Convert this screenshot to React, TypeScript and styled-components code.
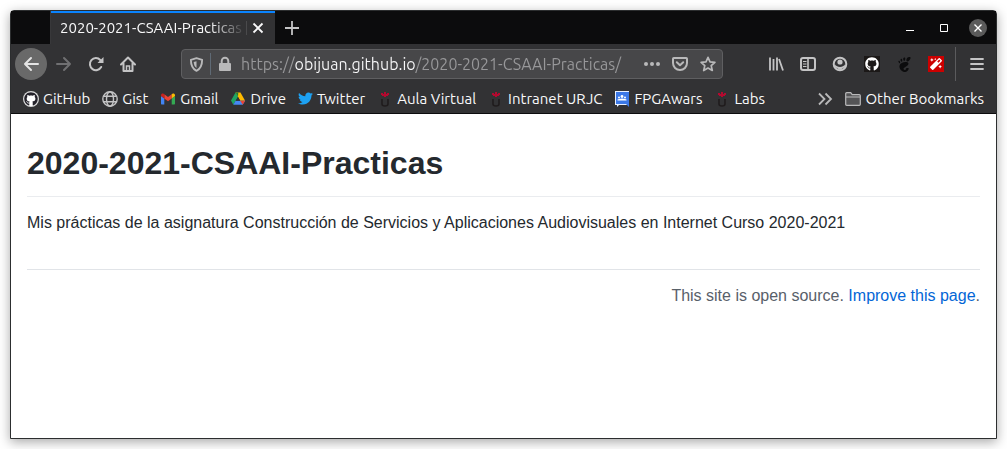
import React from 'react';
import styled, { createGlobalStyle, css } from 'styled-components';
import { FaGithub, FaMagic, FaTwitter } from 'react-icons/fa';
import { SiGnome } from 'react-icons/si';

const uiFont = 'Ubuntu, "Noto Sans", sans-serif';
const pageFont = '"Liberation Sans", Arial, Helvetica, sans-serif';

const GlobalStyle = createGlobalStyle`
  *, *::before, *::after { box-sizing: border-box; }
  body { margin: 0; background: #fff; }
`;

const Desktop = styled.div`
  display: flex;
  min-height: 100vh;
  padding: 10px;
`;

const BrowserWindow = styled.div`
  flex: 1;
  min-width: 0;
  display: flex;
  flex-direction: column;
  border: 1px solid #2c2e2f;
  border-radius: 4px 4px 0 0;
  background: #fff;
  box-shadow: 0 3px 12px rgba(0, 0, 0, 0.35);
  font-family: ${uiFont};
`;

const bareButton = css`
  display: flex;
  align-items: center;
  justify-content: center;
  flex: none;
  padding: 0;
  border: 0;
  background: none;
  color: #b9b9ba;
`;

const TabStrip = styled.div`
  display: flex;
  height: 33px;
  padding-left: 39px;
  background: #0c0c0d;
`;

const Tab = styled.div`
  display: flex;
  align-items: center;
  width: 225px;
  padding: 0 6px 0 9px;
  border-left: 1px solid #38383a;
  background: #323234;
  box-shadow: inset 0 2px #0a84ff;
`;

const TabTitle = styled.span`
  flex: 1;
  overflow: hidden;
  white-space: nowrap;
  font-size: 15px;
  line-height: 20px;
  color: #f9f9fa;
  mask-image: linear-gradient(to left, transparent, #000 36px);
`;

const TabSeparator = styled.span`
  width: 1px;
  height: 14px;
  background: #4a4a4c;
`;

const TabButton = styled.button<{ $width: number }>`
  ${bareButton}
  width: ${(p) => p.$width}px;
  color: #f9f9fa;
`;

const WindowControls = styled.div`
  display: flex;
  align-items: center;
  gap: 16px;
  margin-left: auto;
  padding-right: 9px;
`;

const WindowButton = styled.button<{ $round?: boolean }>`
  ${bareButton}
  width: 18px;
  height: 18px;
  border-radius: 50%;
  background: ${(p) => (p.$round ? '#5a5a5a' : 'none')};
  color: #fff;
`;

const Toolbar = styled.div`
  display: flex;
  align-items: center;
  height: 40px;
  padding: 0 3px 0 4px;
  background: #323234;
`;

const ToolButton = styled.button<{ $raised?: boolean; $dim?: boolean }>`
  ${bareButton}
  width: 32px;
  height: 32px;
  margin-right: ${(p) => (p.$raised ? '1px' : '0')};
  border-radius: 50%;
  background: ${(p) => (p.$raised ? '#696969' : 'none')};
  color: ${(p) => (p.$raised ? '#e4e4e4' : p.$dim ? '#707072' : '#c4c4c5')};
`;

const AddressBar = styled.div`
  flex: 1;
  display: flex;
  align-items: center;
  min-width: 0;
  height: 30px;
  margin: 0 37px;
  border: 1px solid #5f5f61;
  border-radius: 4px;
  background: #474749;
`;

const AddressButton = styled.button`
  ${bareButton}
  width: 28px;
  height: 28px;
`;

const AddressDivider = styled.span`
  width: 1px;
  height: 22px;
  background: #5f6a75;
`;

const AddressInput = styled.input`
  flex: 1;
  min-width: 0;
  padding: 0 0 0 2px;
  border: 0;
  outline: 0;
  font: 16px/20px ${uiFont};
  color: transparent;
  background: linear-gradient(90deg, #98989a 56px, #f9f9fa 56px 176px, #98989a 176px);
  background-clip: text;
  -webkit-background-clip: text;
`;

const ToolbarDivider = styled.span`
  width: 1px;
  height: 34px;
  margin-left: 3px;
  margin-right: 5px;
  background: #5b5b5d;
`;

const BookmarksBar = styled.nav`
  display: flex;
  align-items: center;
  gap: 12px;
  height: 30px;
  padding: 0 12px;
  border-bottom: 1px solid #0c0c0d;
  background: #323234;
`;

const bookmarkLook = css`
  display: flex;
  align-items: center;
  gap: 4px;
  flex: none;
  padding: 0;
  border: 0;
  background: none;
  font: 15px/20px ${uiFont};
  color: #f9f9fa;
  text-decoration: none;
  white-space: nowrap;
`;

const Bookmark = styled.a`
  ${bookmarkLook}
`;

const FolderButton = styled.button`
  ${bookmarkLook}
`;

const OverflowButton = styled.button`
  ${bareButton}
  margin-left: auto;
`;

const Page = styled.main`
  flex: 1;
  padding: 31px 16px;
  font: 16px/24px ${pageFont};
  color: #24292e;
`;

const Title = styled.h1`
  margin: 0 0 14px;
  padding-bottom: 15px;
  border-bottom: 1px solid #eaecef;
  font-size: 32px;
  line-height: 36px;
  font-weight: 700;
`;

const Description = styled.p`
  margin: 0;
`;

const PageFooter = styled.footer`
  margin-top: 34px;
  padding-top: 14px;
  border-top: 1px solid #e1e4e8;
  color: #586069;
  text-align: right;
`;

const PageLink = styled.a`
  color: #0366d6;
  text-decoration: none;
`;

const Svg = ({ children, size = 16 }: { children: React.ReactNode; size?: number }) => (
  <svg width={size} height={size} viewBox="0 0 16 16" fill="none" stroke="currentColor" strokeWidth="2" aria-hidden="true">
    {children}
  </svg>
);

const GithubIcon = () => (
  <Svg>
    <circle cx="8" cy="8" r="8" fill="#d8d8d8" stroke="none" />
    <circle cx="8" cy="8" r="7" fill="#fff" stroke="none" />
    <FaGithub x="1" y="1" size={14} color="#24222a" stroke="none" />
  </Svg>
);

const GlobeIcon = () => (
  <Svg>
    <g stroke="#c4c4c5" strokeWidth="1.4">
      <circle cx="8" cy="8" r="7.2" />
      <ellipse cx="8" cy="8" rx="3.5" ry="7.2" />
      <path d="M1.5 5.3h13M1.5 10.7h13" />
    </g>
  </Svg>
);

const GmailIcon = () => (
  <Svg>
    <g stroke="none">
      <path fill="#4285f4" d="M1 5v7.5c0 .6.4 1 1 1h2.3V7.5z" />
      <path fill="#34a853" d="M15 5v7.5c0 .6-.4 1-1 1h-2.3V7.5z" />
      <path fill="#ea4335" d="M4.3 3.3 8 6.1l3.7-2.8v4.2L8 10.3 4.3 7.5z" />
      <path fill="#c5221f" d="M1 4.3c0-1.5 1.7-2.2 2.8-1.4l.5.4v4.2L1 5z" />
      <path fill="#fbbc04" d="M15 4.3c0-1.5-1.7-2.2-2.8-1.4l-.5.4v4.2L15 5z" />
    </g>
  </Svg>
);

const DriveIcon = () => (
  <Svg>
    <g stroke="none">
      <path fill="#1fa463" d="M5.5 1.5 1 9.5l2.3 4.3L8 5.7z" />
      <path fill="#ffba00" d="M5.5 1.5h5l4.6 8.2h-4.9z" />
      <path fill="#4688f4" d="M5.6 9.7h9.5l-2.4 4.1H3.3z" />
      <path fill="#188038" d="M5.5 1.5h2.8L8 5.7z" />
      <path fill="#ea4335" d="M10.2 9.7h4.9l-2.4 4.1z" />
      <path fill="#323234" d="m8 5.9 2.2 3.8H5.8z" />
    </g>
  </Svg>
);

const UniversityIcon = () => (
  <Svg>
    <path d="M5 8v5c0 1.400 1 2 3 2s3-.600 3-2V8" stroke="#201c1d" strokeWidth="1.600" />
    <path d="M4 2h2v1h1V1h2v2h1V2h2v2h-1v1H9v1H7V5H5V4H4z" fill="#b3092f" stroke="none" />
  </Svg>
);

const GroupsIcon = () => (
  <Svg>
    <g stroke="none">
      <path fill="#e8f0fe" d="M1 0h14v14H5l-2 2v-2H1z" />
      <path fill="#3b78e7" d="M2 1h13v15l-3-3H2z" />
      <circle cx="8" cy="5.5" r="1.4" fill="#fff" />
      <circle cx="5" cy="6.5" r="1" fill="#fff" />
      <circle cx="11" cy="6.5" r="1" fill="#fff" />
      <path fill="#fff" d="M3.500 9.500V8.400l1.500-.4 3-.4 3 .4 1.500.4v1.100z" />
    </g>
  </Svg>
);

const FolderIcon = () => (
  <Svg>
    <path d="M.7 13.3V2.7c0-.6.4-1 1-1h4l1.5 2h7.1c.6 0 1 .4 1 1v8.6c0 .6-.4 1-1 1H1.7c-.6 0-1-.4-1-1zM.7 6h14.6" fill="#545456" stroke="#b9b9ba" strokeWidth="1.2" />
  </Svg>
);

const bookmarks = [
  { label: 'GitHub', icon: <GithubIcon /> },
  { label: 'Gist', icon: <GlobeIcon /> },
  { label: 'Gmail', icon: <GmailIcon /> },
  { label: 'Drive', icon: <DriveIcon /> },
  { label: 'Twitter', icon: <FaTwitter size={15} color="#1da1f2" /> },
  { label: 'Aula Virtual', icon: <UniversityIcon /> },
  { label: 'Intranet URJC', icon: <UniversityIcon /> },
  { label: 'FPGAwars', icon: <GroupsIcon /> },
  { label: 'Labs', icon: <UniversityIcon /> },
];

export default function App() {
  return (
    <>
      <GlobalStyle />
      <Desktop>
        <BrowserWindow>
          <TabStrip>
            <Tab>
              <TabTitle>2020-2021-CSAAI-Practicas</TabTitle>
              <TabSeparator />
              <TabButton $width={22} aria-label="Close tab">
                <Svg><path d="m3.5 3.5 9 9m0-9-9 9" strokeWidth="1.8" /></Svg>
              </TabButton>
            </Tab>
            <TabButton $width={34} aria-label="New tab">
              <Svg><path d="M8 1v14M1 8h14" stroke="#c4c4c5" strokeWidth="1.8" /></Svg>
            </TabButton>
            <WindowControls>
              <WindowButton aria-label="Minimize">
                <Svg><path d="M4 10.5h8" strokeWidth="1" /></Svg>
              </WindowButton>
              <WindowButton aria-label="Maximize">
                <Svg><path d="M4.5 4.5h7v7h-7z" strokeWidth="1" /></Svg>
              </WindowButton>
              <WindowButton $round aria-label="Close window">
                <Svg><path d="m4.5 4.5 7 7m0-7-7 7" strokeWidth="1.4" /></Svg>
              </WindowButton>
            </WindowControls>
          </TabStrip>

          <Toolbar>
            <ToolButton $raised aria-label="Back">
              <Svg><path d="M15 8H2m6-6L2 8l6 6" strokeLinecap="round" strokeLinejoin="round" /></Svg>
            </ToolButton>
            <ToolButton $dim aria-label="Forward">
              <Svg><path d="M1 8h13M8 2l6 6-6 6" strokeLinecap="round" strokeLinejoin="round" /></Svg>
            </ToolButton>
            <ToolButton aria-label="Reload">
              <Svg>
                <path d="M13.2 11A6 6 0 1 1 12.3 4" strokeLinecap="round" />
                <path d="M15.5 1v6h-6z" fill="currentColor" stroke="none" />
              </Svg>
            </ToolButton>
            <ToolButton aria-label="Home">
              <Svg>
                <path d="M1 8.5 8 1.5l7 7M3.5 7.5V15h9V7.5" strokeLinecap="round" strokeLinejoin="round" />
                <path d="M6.5 14v-4h3v4" strokeWidth="1.5" />
              </Svg>
            </ToolButton>
            <AddressBar>
              <AddressButton aria-label="Tracking protection">
                <Svg size={15}>
                  <path d="M8 1.2 14 3c0 5.5-1 9.5-6 11.8C3 12.5 2 8.5 2 3z" strokeLinejoin="round" />
                  <path d="M8 4.5 5 5.3c.2 2.7.8 5 3 6.4z" fill="currentColor" stroke="none" />
                </Svg>
              </AddressButton>
              <AddressDivider />
              <AddressButton aria-label="Connection secure">
                <Svg>
                  <path d="M4.7 8V5a3.3 3.3 0 0 1 6.6 0v3" />
                  <rect x="2" y="7" width="12" height="8" rx="1" fill="currentColor" stroke="none" />
                </Svg>
              </AddressButton>
              <AddressInput
                aria-label="Address"
                defaultValue="https://obijuan.github.io/2020-2021-CSAAI-Practicas/"
              />
              <AddressButton aria-label="Page actions">
                <Svg>
                  <g fill="currentColor" stroke="none">
                    <circle cx="2" cy="8" r="2" /><circle cx="8" cy="8" r="2" /><circle cx="14" cy="8" r="2" />
                  </g>
                </Svg>
              </AddressButton>
              <AddressButton aria-label="Save to Pocket">
                <Svg>
                  <path d="M1.8 2h12.4c.5 0 .8.3.8.8V7A7 7 0 0 1 1 7V2.8c0-.5.3-.8.8-.8z" />
                  <path d="M4.8 6.2 8 9.2l3.2-3" strokeLinecap="round" strokeLinejoin="round" />
                </Svg>
              </AddressButton>
              <AddressButton aria-label="Bookmark this page">
                <Svg>
                  <path d="m8 1.3 2 4.5 4.9.5-3.7 3.3 1.1 4.9L8 12l-4.3 2.5 1.1-4.9L1.1 6.3 6 5.8z" strokeWidth="1.7" strokeLinejoin="round" />
                </Svg>
              </AddressButton>
            </AddressBar>
            <ToolButton aria-label="Library">
              <Svg><path d="M2 1.5v13M5.5 3v11.5M9 1.5v13M11 3l4 11.5" strokeWidth="1.8" /></Svg>
            </ToolButton>
            <ToolButton aria-label="Sidebars">
              <Svg>
                <rect x="1" y="2" width="14" height="12" rx="2" />
                <path d="M8 2v12" strokeWidth="1.6" />
                <path d="M3 5.5h3.5M3 8h3.5M3 10.5h3.5" strokeWidth="1" />
              </Svg>
            </ToolButton>
            <ToolButton aria-label="Account">
              <Svg>
                <circle cx="8" cy="8" r="6.3" />
                <circle cx="8" cy="6" r="2.6" fill="currentColor" stroke="none" />
                <path d="M3.2 8.5C4.5 11.8 11.5 11.8 12.8 8.5L13 11 8 14l-5-3z" fill="currentColor" stroke="none" />
              </Svg>
            </ToolButton>
            <ToolButton aria-label="GitHub">
              <Svg>
                <path d="M0 0h16v16H0z" fill="#1b1817" stroke="none" />
                <FaGithub x="1" y="1" size={14} color="#fff" stroke="none" />
              </Svg>
            </ToolButton>
            <ToolButton aria-label="GNOME Shell integration">
              <SiGnome size={15} color="#0c0c0d" />
            </ToolButton>
            <ToolButton aria-label="Magic wand">
              <Svg>
                <path d="M0 0h16v16H0z" fill="#c00" stroke="none" />
                <FaMagic x="2" y="2" size={12} color="#fff" stroke="none" />
              </Svg>
            </ToolButton>
            <ToolbarDivider />
            <ToolButton aria-label="Open menu">
              <Svg><path d="M2 3h12M2 8h12M2 13h12" strokeLinecap="round" strokeWidth="1.8" /></Svg>
            </ToolButton>
          </Toolbar>

          <BookmarksBar aria-label="Bookmarks">
            {bookmarks.map((b) => (
              <Bookmark key={b.label} href="#">
                {b.icon}
                {b.label}
              </Bookmark>
            ))}
            <OverflowButton aria-label="More bookmarks">
              <Svg><path d="m2 2.5 5.5 5.5L2 13.5M8.5 2.5 14 8l-5.5 5.5" strokeWidth="1.8" /></Svg>
            </OverflowButton>
            <FolderButton>
              <FolderIcon />
              Other Bookmarks
            </FolderButton>
          </BookmarksBar>

          <Page>
            <Title>2020-2021-CSAAI-Practicas</Title>
            <Description>
              Mis prácticas de la asignatura Construcción de Servicios y Aplicaciones Audiovisuales en Internet Curso
              2020-2021
            </Description>
            <PageFooter>
              This site is open source. <PageLink href="#">Improve this page</PageLink>.
            </PageFooter>
          </Page>
        </BrowserWindow>
      </Desktop>
    </>
  );
}
